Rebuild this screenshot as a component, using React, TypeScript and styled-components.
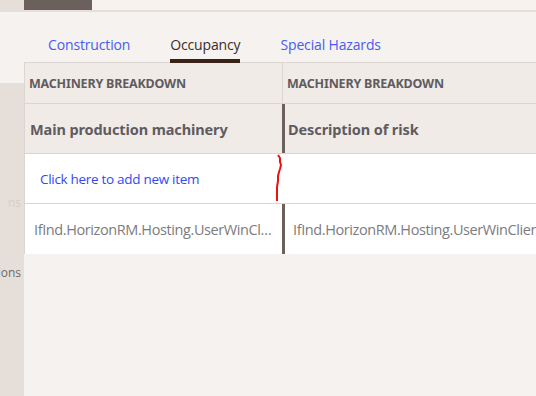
import React from 'react';
import styled, { createGlobalStyle } from 'styled-components';

const GlobalStyle = createGlobalStyle`
  html, body {
    margin: 0;
    padding: 0;
    background: #f5f2ef;
    font-family: Lato, "Open Sans", sans-serif;
    overflow: hidden;
  }
`;

const Page = styled.div`
  display: flex;
  flex-direction: column;
  width: 536px;
  height: 396px;
  overflow: hidden;
`;

const TopBar = styled.div`
  display: flex;
  height: 12px;
  flex-shrink: 0;
`;

const TopCorner = styled.div`
  width: 24px;
  background: #e6ded9;
`;

const TopStrip = styled.div`
  flex: 1;
  display: flex;
  border-bottom: 2px solid #e6ded9;
  background: #f5f2ef;
`;

const ActiveBlock = styled.div`
  width: 68px;
  height: 10px;
  background: #6b605b;
`;

const Body = styled.div`
  flex: 1;
  display: flex;
  min-height: 0;
`;

const Rail = styled.div`
  width: 24px;
  flex-shrink: 0;
  display: flex;
  flex-direction: column;
  padding-top: 71px;
`;

const RailPanel = styled.div`
  flex: 1;
  background: #e6ded9;
  display: flex;
  flex-direction: column;
  overflow: hidden;
`;

const RailItem = styled.div<{ $faint?: boolean; $top: number }>`
  display: flex;
  justify-content: flex-end;
  margin-top: ${(p) => p.$top}px;
  padding-right: 3px;
  white-space: nowrap;
  font-family: "Open Sans", sans-serif;
  font-size: 12px;
  line-height: 16px;
  color: ${(p) => (p.$faint ? '#d6cdc7' : '#6e6a6a')};
`;

const Main = styled.div`
  flex: 1;
  display: flex;
  flex-direction: column;
  min-width: 0;
`;

const Tabs = styled.div`
  display: flex;
  align-items: flex-end;
  gap: 40px;
  height: 50px;
  padding-left: 24px;
  border-bottom: 1px solid #dcd6d2;
`;

const Tab = styled.div<{ $active?: boolean }>`
  font-family: "Open Sans", sans-serif;
  font-size: 14px;
  line-height: 19px;
  padding-bottom: 5px;
  color: ${(p) => (p.$active ? '#3b2e28' : '#4a5cf0')};
  border-bottom: 4px solid ${(p) => (p.$active ? '#3a2016' : 'transparent')};
  margin-bottom: -1px;
  letter-spacing: -0.15px;
`;

const Table = styled.div`
  display: flex;
  flex-direction: column;
  border-left: 1px solid #dcd6d2;
`;

const Row = styled.div<{ $height: number; $bg: string; $borderTop?: boolean }>`
  position: relative;
  display: flex;
  height: ${(p) => p.$height}px;
  background: ${(p) => p.$bg};
  border-top: ${(p) => (p.$borderTop ? '1px solid #dcd6d2' : 'none')};
`;

type Divider = 'light' | 'dark' | 'none';

const Cell = styled.div<{ $width?: number; $divider?: Divider; $pad: number; $padRight?: number }>`
  ${(p) => (p.$width ? `width: ${p.$width}px; flex-shrink: 0;` : 'flex: 1;')}
  display: flex;
  align-items: center;
  min-width: 0;
  padding-left: ${(p) => p.$pad}px;
  padding-right: ${(p) => p.$padRight ?? 0}px;
  box-sizing: border-box;
  overflow: hidden;
  white-space: nowrap;
  border-left: ${(p) =>
    p.$divider === 'dark'
      ? '3px solid #6b605b'
      : p.$divider === 'light'
      ? '1px solid #dcd6d2'
      : 'none'};
`;

const GroupLabel = styled.span`
  font-family: "Noto Sans", sans-serif;
  font-weight: 700;
  font-size: 12.5px;
  color: #5f5b60;
  letter-spacing: -0.2px;
`;

const ColumnLabel = styled.span`
  font-family: "Noto Sans", sans-serif;
  font-weight: 700;
  font-size: 14.5px;
  color: #5f5b60;
  letter-spacing: -0.1px;
`;

const AddLink = styled.span`
  font-family: "Open Sans", sans-serif;
  font-size: 13.5px;
  color: #3347f5;
  letter-spacing: -0.3px;
`;

const ValueText = styled.span<{ $clip?: boolean }>`
  font-family: "Open Sans", sans-serif;
  font-size: 14.5px;
  color: #7c7c80;
  overflow: hidden;
  text-overflow: ${(p) => (p.$clip ? 'clip' : 'ellipsis')};
  letter-spacing: -0.4px;
`;

const Mark = styled.svg`
  position: absolute;
  left: 225px;
  top: 0;
  pointer-events: none;
`;

const FIRST_COL = 257;
const VALUE = 'IfInd.HorizonRM.Hosting.UserWinClient.Controls.MultiSelect';

const App: React.FC = () => {
  return (
    <Page>
      <GlobalStyle />
      <TopBar>
        <TopCorner />
        <TopStrip>
          <ActiveBlock />
        </TopStrip>
      </TopBar>
      <Body>
        <Rail>
          <RailPanel>
            <RailItem $top={112} $faint>
              ns
            </RailItem>
            <RailItem $top={54}>ions</RailItem>
          </RailPanel>
        </Rail>
        <Main>
          <Tabs>
            <Tab>Construction</Tab>
            <Tab $active>Occupancy</Tab>
            <Tab>Special Hazards</Tab>
          </Tabs>
          <Table>
            <Row $height={40} $bg="#f0ebe7">
              <Cell $width={FIRST_COL} $pad={4}>
                <GroupLabel>MACHINERY BREAKDOWN</GroupLabel>
              </Cell>
              <Cell $divider="light" $pad={4}>
                <GroupLabel>MACHINERY BREAKDOWN</GroupLabel>
              </Cell>
            </Row>
            <Row $height={49} $bg="#f0ebe7" $borderTop>
              <Cell $width={FIRST_COL} $pad={5}>
                <ColumnLabel>Main production machinery</ColumnLabel>
              </Cell>
              <Cell $divider="dark" $pad={3}>
                <ColumnLabel>Description of risk</ColumnLabel>
              </Cell>
            </Row>
            <Row $height={49} $bg="#ffffff" $borderTop>
              <Cell $width={FIRST_COL} $pad={15}>
                <AddLink>Click here to add new item</AddLink>
              </Cell>
              <Cell $pad={3} />
              <Mark width="40" height="49" viewBox="0 0 40 49">
                <path
                  d="M28 1 L30 4 L30 8 L31 11 L30 15 L29 18 L28 22 L28 27 L27 33 L27 40 L27 47"
                  stroke="#ee1111"
                  strokeWidth="2"
                  strokeLinejoin="round"
                  fill="none"
                />
              </Mark>
            </Row>
            <Row $height={50} $bg="#ffffff" $borderTop>
              <Cell $width={FIRST_COL} $pad={9} $padRight={8}>
                <ValueText>{VALUE}</ValueText>
              </Cell>
              <Cell $divider="dark" $pad={8}>
                <ValueText $clip>{VALUE}</ValueText>
              </Cell>
            </Row>
          </Table>
        </Main>
      </Body>
    </Page>
  );
};

export default App;
